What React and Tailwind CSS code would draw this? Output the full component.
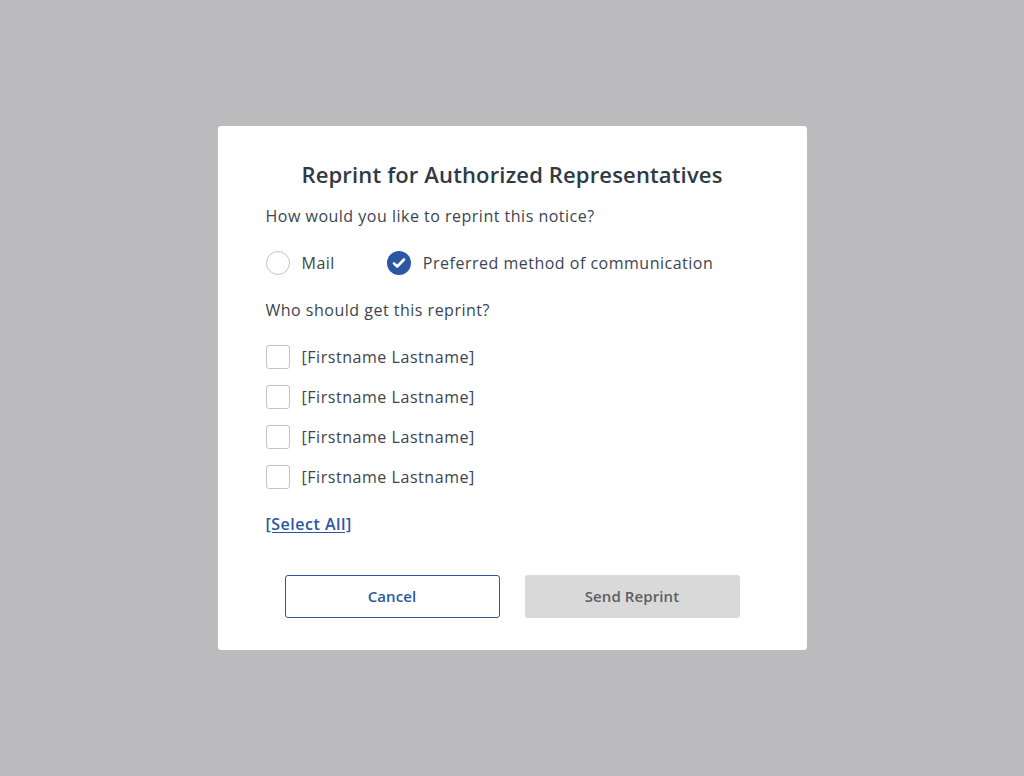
import { useState } from 'react';

const people = ['[Firstname Lastname]', '[Firstname Lastname]', '[Firstname Lastname]', '[Firstname Lastname]'];

const App = () => {
  const [method, setMethod] = useState('preferred');
  const [checked, setChecked] = useState([false, false, false, false]);

  const toggle = (i) => setChecked(checked.map((c, j) => (j === i ? !c : c)));
  const selectAll = () => setChecked(checked.map(() => true));

  return (
    <div
      className="min-h-screen bg-[#bbbbbd] flex items-center justify-center"
      style={{ fontFamily: '"Open Sans", "Noto Sans", sans-serif' }}
    >
      <div className="w-[589px] bg-white rounded-[3px] px-12 pt-[30px] pb-8 text-[#3b4550]">
        <h2 className="text-center text-[22px] font-semibold leading-[36px] tracking-[0.15px] text-[#2f3a44]">
          Reprint for Authorized Representatives
        </h2>

        <p className="mt-[12px] text-[16px] leading-6 tracking-[0.5px]">How would you like to reprint this notice?</p>

        <div className="mt-[23px] flex items-center h-6">
          <button onClick={() => setMethod('mail')} className="flex items-center">
            {method === 'mail' ? (
              <CheckedCircle />
            ) : (
              <span className="w-6 h-6 rounded-full border border-[#c4c4c4] bg-white" />
            )}
            <span className="ml-3 text-[16px] tracking-[0.5px]">Mail</span>
          </button>
          <button onClick={() => setMethod('preferred')} className="flex items-center ml-[52px]">
            {method === 'preferred' ? (
              <CheckedCircle />
            ) : (
              <span className="w-6 h-6 rounded-full border border-[#c4c4c4] bg-white" />
            )}
            <span className="ml-3 text-[16px] tracking-[0.5px]">Preferred method of communication</span>
          </button>
        </div>

        <p className="mt-[23px] text-[16px] leading-6 tracking-[0.5px]">Who should get this reprint?</p>

        <div className="mt-[23px] flex flex-col gap-4">
          {people.map((name, i) => (
            <label key={i} className="flex items-center h-6 cursor-pointer">
              <span
                onClick={() => toggle(i)}
                className={`w-6 h-6 rounded-[3px] border flex items-center justify-center ${
                  checked[i] ? 'bg-[#2b56a4] border-[#2b56a4]' : 'bg-white border-[#c4c4c4]'
                }`}
              >
                {checked[i] && (
                  <svg width="14" height="14" viewBox="0 0 14 14">
                    <path d="M2.5 7.2l3 3 6-6.2" fill="none" stroke="#fff" strokeWidth="2.2" strokeLinecap="round" strokeLinejoin="round" />
                  </svg>
                )}
              </span>
              <span className="ml-3 text-[16px] tracking-[0.55px]">{name}</span>
            </label>
          ))}
        </div>

        <button
          onClick={selectAll}
          className="mt-[23px] block text-[16px] font-semibold leading-6 tracking-[0.5px] text-[#2b56a4] underline underline-offset-2"
        >
          [Select All]
        </button>

        <div className="mt-[39px] flex justify-center gap-[25px]">
          <button className="w-[215px] h-[43px] rounded-[3px] border border-[#2b56a4] bg-white text-[#2b56a4] text-[15px] font-semibold tracking-[0.1px]">
            Cancel
          </button>
          <button className="w-[215px] h-[43px] rounded-[3px] bg-[#d9d9d9] text-[#5e5e5e] text-[15px] font-semibold tracking-[0.1px]">
            Send Reprint
          </button>
        </div>
      </div>
    </div>
  );
};

const CheckedCircle = () => (
  <span className="w-6 h-6 rounded-full bg-[#2b56a4] flex items-center justify-center">
    <svg width="16" height="16" viewBox="0 0 16 16">
      <path d="M3 8.4l3.2 3.1 6.8-7" fill="none" stroke="#fff" strokeWidth="2.6" strokeLinecap="round" strokeLinejoin="round" />
    </svg>
  </span>
);

export default App;
